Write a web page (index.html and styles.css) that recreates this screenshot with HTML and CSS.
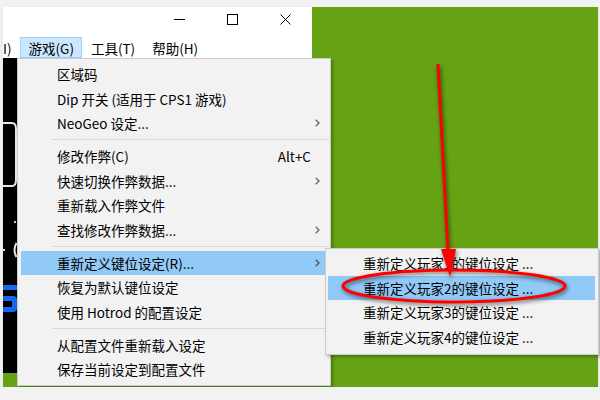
FILE: index.html
```html
<!DOCTYPE html>
<html>
    <head>
        <meta charset="UTF-8">
        <meta name="viewport" content="width=device-width, initial-scale=1.0">
        <title>键位设定</title>
        <link rel="stylesheet" href="styles.css">
    </head>
    <body>
        <div class="desk">
            <div class="win">
                <div class="title">
                    <span class="tbtn"><i class="ico-min"></i></span>
                    <span class="tbtn"><i class="ico-max"></i></span>
                    <span class="tbtn">
                        <svg width="11" height="11" viewBox="0 0 11 11"><path d="M0.5 0.5 L10.5 10.5 M10.5 0.5 L0.5 10.5" stroke="#000" stroke-width="1"/></svg>
                    </span>
                </div>
                <div class="menubar">
                    <span class="mitem first">I)</span>
                    <span class="mitem open">游戏(G)</span>
                    <span class="mitem">工具(T)</span>
                    <span class="mitem">帮助(H)</span>
                </div>
                <div class="game">
                    <svg width="14" height="315" viewBox="0 0 14 315">
                        <path d="M0 65 H9 Q13 65 13 71 V122 Q13 128 9 128 H0" fill="none" stroke="#e6e6e6" stroke-width="2"/>
                        <rect x="11" y="163" width="2" height="2" fill="#ccc"/>
                        <rect x="0" y="191" width="2" height="2" fill="#ddd"/>
                        <path d="M13.5 185 Q9.5 192 13.5 199" fill="none" stroke="#e6e6e6" stroke-width="2"/>
                        <path d="M0 227 H14 V232 H0 Z" fill="#1668ee"/>
                        <path d="M0 238 H10 Q14 238 14 242 V250 Q14 254 10 254 H0 V249 H9 V243 H0 Z" fill="#1668ee"/>
                    </svg>
                </div>
            </div>

            <div class="menu main">
                <div class="row"><span class="label">区域码</span><span class="arr"></span></div>
                <div class="row"><span class="label">Dip 开关 (适用于 CPS1 游戏)</span><span class="arr"></span></div>
                <div class="row"><span class="label">NeoGeo 设定...</span><span class="arr"><svg width="5" height="8" viewBox="0 0 5 8"><path d="M0.7 0.7 L4 4 L0.7 7.3" fill="none" stroke="#666" stroke-width="1.3"/></svg></span></div>
                <div class="sep"></div>
                <div class="row"><span class="label">修改作弊(C)</span><span class="key">Alt+C</span><span class="arr"></span></div>
                <div class="row"><span class="label">快速切换作弊数据...</span><span class="arr"><svg width="5" height="8" viewBox="0 0 5 8"><path d="M0.7 0.7 L4 4 L0.7 7.3" fill="none" stroke="#666" stroke-width="1.3"/></svg></span></div>
                <div class="row"><span class="label">重新载入作弊文件</span><span class="arr"></span></div>
                <div class="row"><span class="label">查找修改作弊数据...</span><span class="arr"><svg width="5" height="8" viewBox="0 0 5 8"><path d="M0.7 0.7 L4 4 L0.7 7.3" fill="none" stroke="#666" stroke-width="1.3"/></svg></span></div>
                <div class="sep"></div>
                <div class="row hot"><span class="label">重新定义键位设定(R)...</span><span class="arr"><svg width="5" height="8" viewBox="0 0 5 8"><path d="M0.7 0.7 L4 4 L0.7 7.3" fill="none" stroke="#555" stroke-width="1.3"/></svg></span></div>
                <div class="row"><span class="label">恢复为默认键位设定</span><span class="arr"></span></div>
                <div class="row"><span class="label">使用 Hotrod 的配置设定</span><span class="arr"></span></div>
                <div class="sep"></div>
                <div class="row"><span class="label">从配置文件重新载入设定</span><span class="arr"></span></div>
                <div class="row"><span class="label">保存当前设定到配置文件</span><span class="arr"></span></div>
            </div>

            <div class="menu sub">
                <div class="row"><span class="label">重新定义玩家1的键位设定 ...</span></div>
                <div class="row hot"><span class="label">重新定义玩家2的键位设定 ...</span></div>
                <div class="row"><span class="label">重新定义玩家3的键位设定 ...</span></div>
                <div class="row"><span class="label">重新定义玩家4的键位设定 ...</span></div>
            </div>

            <!-- red marks drawn over the menus, in page coordinates -->
            <svg class="marks" width="600" height="400" viewBox="0 0 600 400">
                <line x1="438" y1="64" x2="448" y2="252" stroke="#ff0000" stroke-width="3"/>
                <polygon points="441,249 456,249 450,277" fill="#ff0000"/>
                <ellipse cx="454" cy="286" rx="111" ry="16" fill="none" stroke="#ff0000" stroke-width="3"/>
            </svg>
        </div>
    </body>
</html>
```

FILE: styles.css
```css
body {
    margin: 0;
    background-color: #f2f2f2;
    font-family: "Noto Sans CJK SC", "Noto Sans", sans-serif;
    font-size: 13.5px;
    color: #000;
}
.desk {
    position: relative;
    margin: 7px 2px 0 3px;
    height: 380px;
    background-color: #66a314;
    box-shadow: 0 2px 4px rgba(0, 0, 0, 0.08);
}
.win {
    width: 309px;
    height: 366px;
    display: flex;
    flex-direction: column;
}
.title {
    height: 25px;
    background-color: #fff;
    display: flex;
    justify-content: flex-end;
}
.tbtn {
    width: 53px;
    display: flex;
    align-items: center;
    justify-content: center;
}
.ico-min {
    display: block;
    width: 11px;
    height: 1px;
    background-color: #000;
}
.ico-max {
    display: block;
    width: 9px;
    height: 9px;
    border: 1px solid #000;
}
.menubar {
    height: 26px;
    background-color: #fff;
    display: flex;
    align-items: flex-end;
    overflow: hidden;
}
.mitem {
    height: 21px;
    line-height: 20px;
    padding: 0 7px 0 8px;
    box-sizing: border-box;
    border: 1px solid transparent;
    white-space: nowrap;
}
.mitem.first {
    padding: 0 7px 0 0;
    border-left: none;
}
.mitem.open {
    background-color: #cce8ff;
    border-color: #99d1ff;
}
.game {
    flex: 1;
    background-color: #000;
}
.game svg {
    display: block;
}
.menu {
    position: absolute;
    background-color: #f2f2f2;
    border: 1px solid #cccccc;
    box-shadow: 2px 2px 3px rgba(0, 0, 0, 0.28);
}
.menu.main {
    left: 14px;
    top: 51px;
    width: 306px;
    padding: 3px;
}
.menu.sub {
    left: 322px;
    top: 241px;
    width: 267px;
    padding: 2px 3px 5px 2px;
}
.row {
    height: 24.4px;
    display: flex;
    align-items: center;
    padding-left: 36px;
    white-space: nowrap;
}
.menu.sub .row {
    height: 24.5px;
    padding-left: 35px;
}
.row.hot {
    background-color: #91c9f7;
}
.label {
    flex: 1;
}
.arr {
    width: 16px;
    display: flex;
    align-items: center;
    padding-left: 4px;
    box-sizing: border-box;
}
.arr svg {
    display: block;
}
.sep {
    height: 9px;
    margin: 0 -2px 0 31px;
    display: flex;
    align-items: center;
}
.sep::before {
    content: "";
    flex: 1;
    height: 1px;
    background-color: #d7d7d7;
}
.marks {
    position: absolute;
    left: -3px;
    top: -7px;
    pointer-events: none;
    filter: drop-shadow(1px 2px 2px rgba(0, 0, 0, 0.6));
}
```
